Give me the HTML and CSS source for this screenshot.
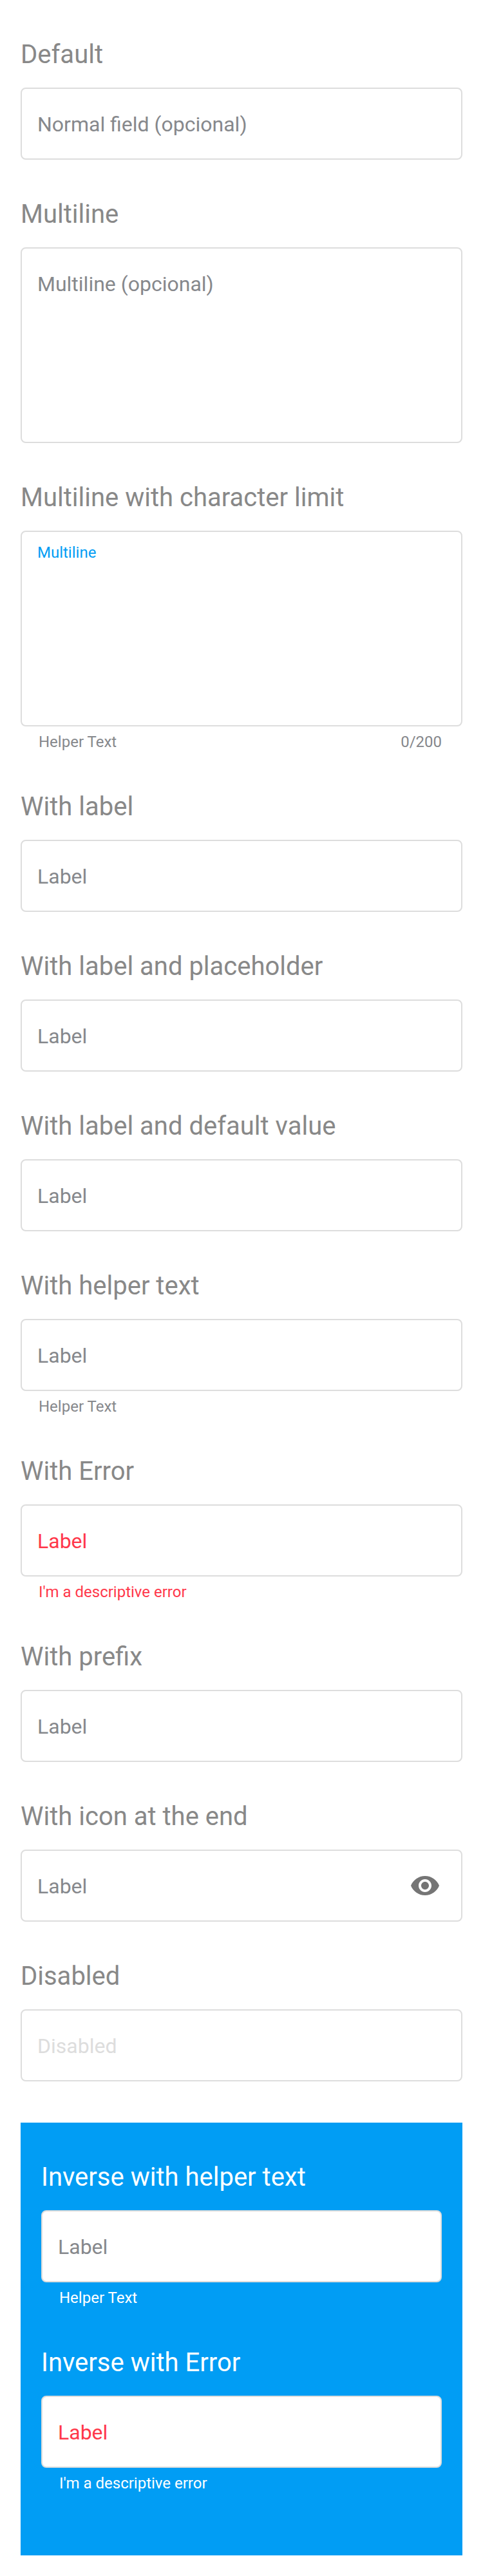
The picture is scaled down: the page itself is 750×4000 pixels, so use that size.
FILE: index.html
```
<!DOCTYPE html>
<html lang="en">
<head>
<meta charset="utf-8">
<title>Text fields</title>
<link rel="stylesheet" href="styles.css">
</head>
<body>
<main class="page">
<section class="group"><h2 class="title">Default</h2><div class="field">Normal field (opcional)</div></section>
<section class="group"><h2 class="title">Multiline</h2><div class="field field-multi">Multiline (opcional)</div></section>
<section class="group"><h2 class="title">Multiline with character limit</h2><div class="field field-multi"><span class="floating">Multiline</span></div><div class="helper"><span>Helper Text</span><span>0/200</span></div></section>
<section class="group"><h2 class="title">With label</h2><div class="field">Label</div></section>
<section class="group"><h2 class="title">With label and placeholder</h2><div class="field">Label</div></section>
<section class="group"><h2 class="title">With label and default value</h2><div class="field">Label</div></section>
<section class="group"><h2 class="title">With helper text</h2><div class="field">Label</div><div class="helper">Helper Text</div></section>
<section class="group"><h2 class="title">With Error</h2><div class="field error">Label</div><div class="helper error">I'm a descriptive error</div></section>
<section class="group"><h2 class="title">With prefix</h2><div class="field">Label</div></section>
<section class="group"><h2 class="title">With icon at the end</h2><div class="field"><span>Label</span><svg class="eye" viewBox="0 0 24 24"><path d="M12 4.5C7 4.5 2.73 7.61 1 12c1.73 4.39 6 7.5 11 7.5s9.27-3.11 11-7.5c-1.73-4.39-6-7.5-11-7.5zM12 17c-2.76 0-5-2.24-5-5s2.24-5 5-5 5 2.24 5 5-2.24 5-5 5zm0-8c-1.66 0-3 1.34-3 3s1.34 3 3 3 3-1.34 3-3-1.34-3-3-3z"/></svg></div></section>
<section class="group"><h2 class="title">Disabled</h2><div class="field disabled">Disabled</div></section>
<div class="inverse">
<section class="group"><h2 class="title">Inverse with helper text</h2><div class="field">Label</div><div class="helper">Helper Text</div></section>
<section class="group"><h2 class="title">Inverse with Error</h2><div class="field error">Label</div><div class="helper">I'm a descriptive error</div></section>
</div>
</main>
</body>
</html>
```
FILE: styles.css
```
* { box-sizing: border-box; }
body { margin: 0; background: #fff; color: #888; font-family: Roboto, sans-serif; }
.page { padding: 32px 32px 0; }
.group { padding-bottom: 32px; }
.title { margin: 0; height: 104px; padding-top: 29px; font-size: 40px; font-weight: 400; line-height: 48px; }
.field { display: flex; align-items: center; justify-content: space-between; height: 112px; padding: 2px 24px 0; border: 2px solid #ddd; border-radius: 8px; background: #fff; font-size: 32px; line-height: 40px; color: #86888c; }
.field-multi { height: 304px; align-items: flex-start; padding-top: 35px; }
.floating { margin-top: -19px; font-size: 24px; line-height: 32px; color: #019df4; }
.helper { display: flex; justify-content: space-between; height: 40px; padding: 8px 32px 0 28px; font-size: 24px; line-height: 32px; color: #86888c; }
.error, .helper.error { color: #ff374a; }
.disabled { color: #ddd; }
.eye { width: 48px; height: 48px; margin: -2px 8px 0 0; fill: #757575; }
.inverse { margin-top: 32px; height: 672px; padding: 32px 32px 0; background: #019df4; color: #fff; }
.inverse .helper { color: #fff; }
```
